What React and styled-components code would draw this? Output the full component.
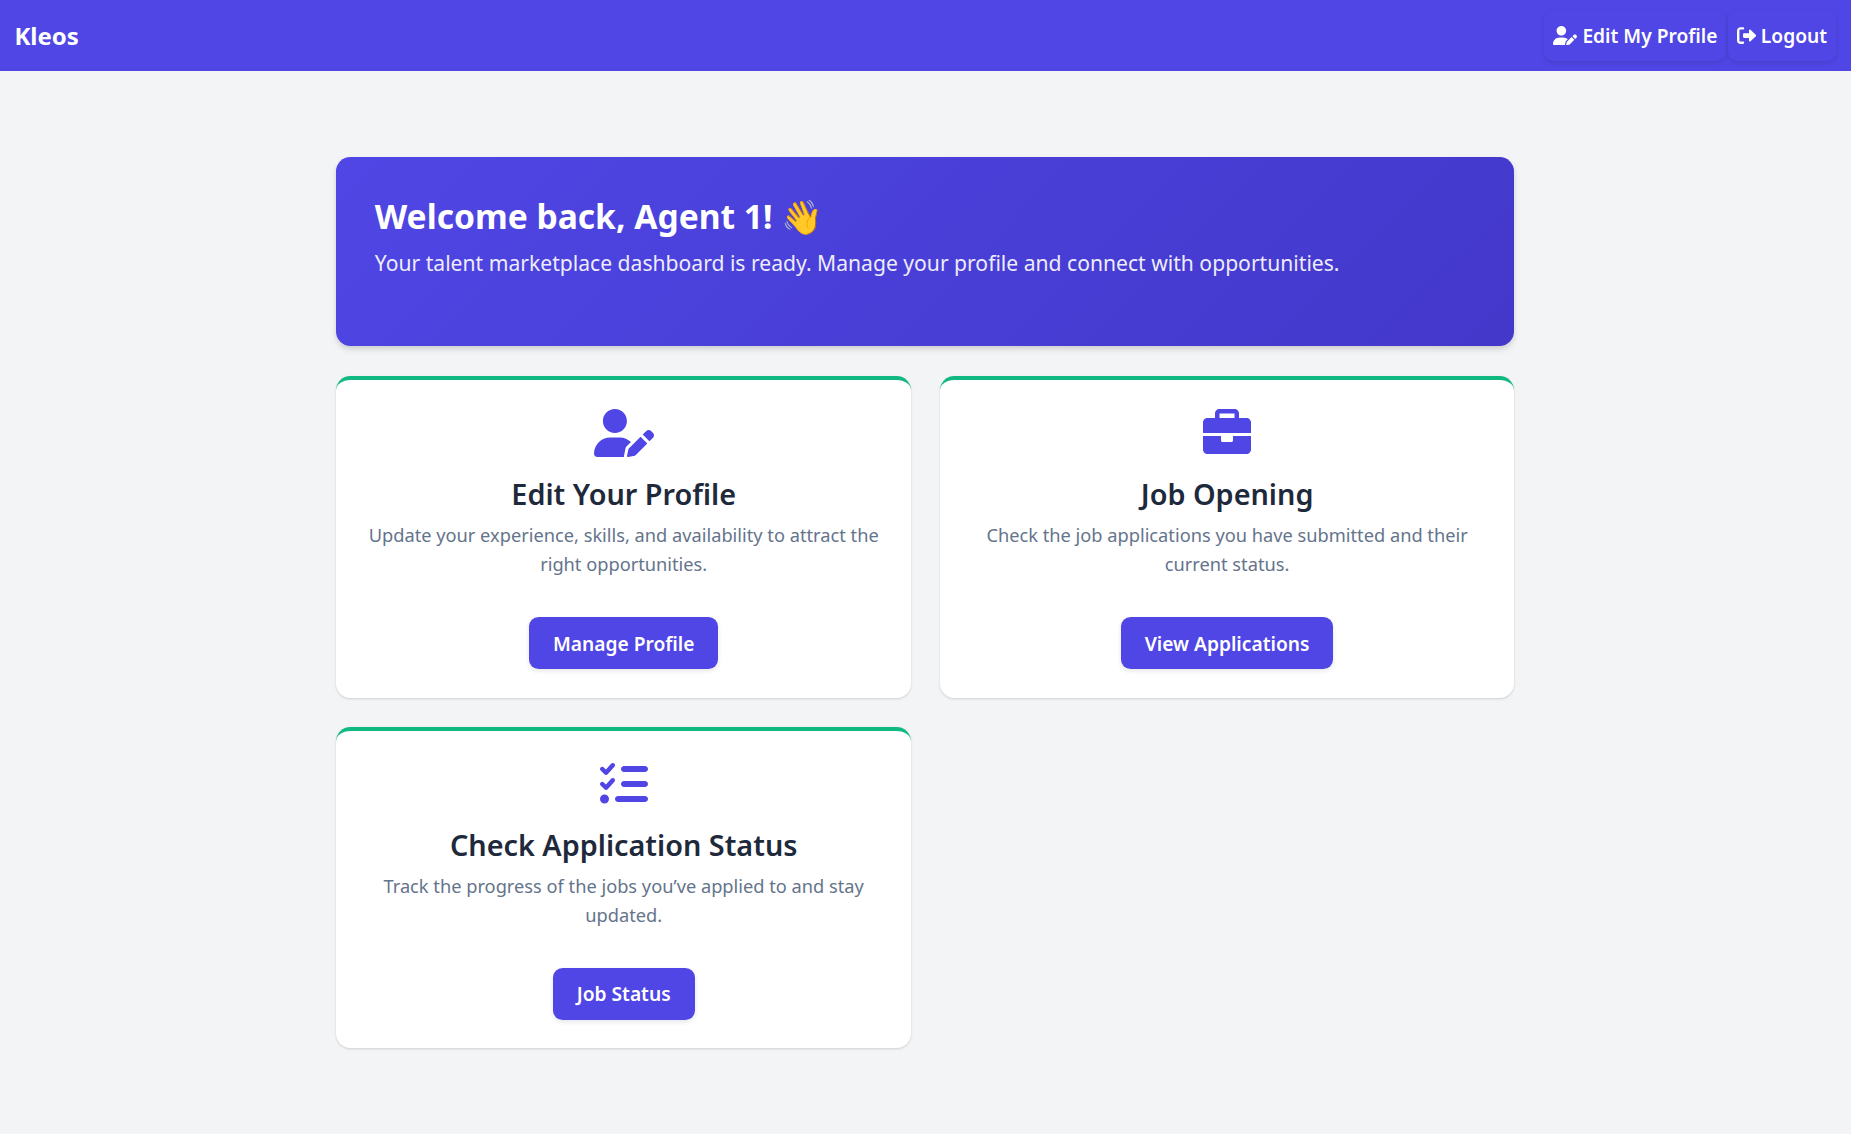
import React from "react";
import styled, { createGlobalStyle } from "styled-components";
import { FaListCheck } from "react-icons/fa6";

const GlobalStyle = createGlobalStyle`
  *, *::before, *::after { box-sizing: border-box; }
  body {
    margin: 0;
    background: #f3f4f6;
    color: #1e293b;
    font-family: "Noto Sans", sans-serif;
    font-size: 19.2px;
    line-height: 1.6;
  }
  h1, h2, p { margin: 0; }
`;

const Page = styled.div`
  min-height: 1134px;
`;

const Navbar = styled.header`
  display: flex;
  align-items: center;
  justify-content: space-between;
  height: 71px;
  padding: 0 14.4px;
  background: #4f46e5;
`;

const Brand = styled.a`
  padding-top: 2px;
  color: #fff;
  font-size: 24px;
  font-weight: 700;
`;

const NavActions = styled.nav`
  display: flex;
  gap: 1.2px;
  padding-right: 0.6px;
`;

const NavButton = styled.button`
  display: flex;
  align-items: center;
  gap: 5px;
  height: 51px;
  padding: 0 9px;
  border: 0;
  border-radius: 9.6px;
  background: #4f46e5;
  color: #fff;
  font: 600 19.2px "Noto Sans", sans-serif;
  box-shadow: 0 2px 5px rgba(0, 0, 0, 0.1);
  svg { display: block; height: 19.2px; width: ${(p) => (p.$wide ? 24 : 19.2)}px; }
`;

const Container = styled.main`
  width: 1178px;
  margin-left: 336.4px;
  padding: 86.4px 0;
`;

const Hero = styled.section`
  height: 189px;
  padding: 34px 38.4px;
  border-radius: 14.4px;
  background: linear-gradient(135deg, #4f46e5, #4338ca);
  color: #fff;
  box-shadow: 0 4px 6px rgba(0, 0, 0, 0.1), 0 2px 4px rgba(0, 0, 0, 0.06);
`;

const HeroTitle = styled.h1`
  font-size: 33.6px;
  font-weight: 700;
  line-height: 50px;
`;

const HeroText = styled.p`
  margin-top: 5px;
  font-size: 21.12px;
  line-height: 34px;
  opacity: 0.9;
`;

const CardGrid = styled.div`
  display: grid;
  grid-template-columns: 1fr 1fr;
  gap: 28.8px;
  margin-top: 30px;
`;

const Card = styled.article`
  display: flex;
  flex-direction: column;
  align-items: center;
  height: 321.6px;
  padding: 28.8px;
  border-top: 4px solid #10b981;
  border-radius: 14.4px;
  background: #fff;
  text-align: center;
  box-shadow: 0 1px 3px rgba(0, 0, 0, 0.1), 0 1px 2px rgba(0, 0, 0, 0.06);
`;

const CardIcon = styled.div`
  height: 48px;
  color: #4f46e5;
  svg { display: block; height: 48px; width: ${(p) => (p.$wide ? 60 : 48)}px; }
`;

const CardTitle = styled.h2`
  margin-top: 14px;
  font-size: 28.8px;
  font-weight: 600;
  line-height: 46px;
`;

const CardText = styled.p`
  margin-top: 4px;
  color: #64748b;
  font-size: 18.24px;
  line-height: 29.2px;
`;

const CardButton = styled.button`
  margin-top: auto;
  height: 52px;
  padding: 0 24px;
  border: 0;
  border-radius: 9.6px;
  background: #4f46e5;
  color: #fff;
  font: 600 19.2px "Noto Sans", sans-serif;
  box-shadow: 0 2px 5px rgba(0, 0, 0, 0.1);
`;

const UserPenIcon = () => (
  <svg viewBox="0 0 640 512" fill="currentColor" aria-hidden="true">
    <path d="M223.1 256c70.7 0 128-57.31 128-128s-57.3-128-128-128C152.4 0 95.1 57.31 95.1 128S153.3 256 223.1 256zM274.7 304H173.3C77.61 304 0 381.7 0 477.4C0 496.5 15.52 512 34.66 512h286.4c-1.246-5.531-1.43-11.31-.2832-17.04l14.28-71.41c1.943-9.723 6.676-18.56 13.68-25.56l45.72-45.72C363.3 322.4 321.2 304 274.7 304zM371.4 420.6c-2.514 2.512-4.227 5.715-4.924 9.203l-14.28 71.41c-1.258 6.289 4.293 11.84 10.59 10.59l71.42-14.29c3.482-.6992 6.682-2.406 9.195-4.922l125.3-125.3l-72.01-72.01L371.4 420.6zM629.5 255.7l-21.1-21.11c-14.06-14.06-36.85-14.06-50.91 0l-38.13 38.14l72.01 72.01l38.13-38.13C643.5 292.5 643.5 269.7 629.5 255.7z" />
  </svg>
);

const LogoutIcon = () => (
  <svg viewBox="0 0 512 512" fill="currentColor" aria-hidden="true">
    <path d="M96 480h64C177.7 480 192 465.7 192 448S177.7 416 160 416H96c-17.67 0-32-14.33-32-32V128c0-17.67 14.33-32 32-32h64C177.7 96 192 81.67 192 64S177.7 32 160 32H96C42.98 32 0 74.98 0 128v256C0 437 42.98 480 96 480zM504.8 238.5l-144.1-136c-6.975-6.578-17.2-8.375-26-4.594c-8.803 3.797-14.51 12.47-14.51 22.05l-.0918 72l-128-.001c-17.69 0-32.02 14.33-32.02 32v64c0 17.67 14.34 32 32.02 32l128 .001l.0918 71.1c0 9.578 5.707 18.25 14.51 22.05c8.803 3.781 19.03 1.984 26-4.594l144.1-136C514.4 264.4 514.4 247.6 504.8 238.5z" />
  </svg>
);

const BriefcaseIcon = () => (
  <svg viewBox="0 0 512 512" fill="currentColor" aria-hidden="true">
    <path d="M320 336c0 8.844-7.156 16-16 16h-96C199.2 352 192 344.8 192 336V288H0v144C0 457.6 22.41 480 48 480h416c25.59 0 48-22.41 48-48V288h-192V336zM464 96H384V48C384 22.41 361.6 0 336 0h-160C150.4 0 128 22.41 128 48V96H48C22.41 96 0 118.4 0 144V256h512V144C512 118.4 489.6 96 464 96zM336 96h-160V48h160V96z" />
  </svg>
);

const cards = [
  {
    icon: UserPenIcon,
    wide: true,
    title: "Edit Your Profile",
    text: "Update your experience, skills, and availability to attract the right opportunities.",
    action: "Manage Profile",
  },
  {
    icon: BriefcaseIcon,
    title: "Job Opening",
    text: "Check the job applications you have submitted and their current status.",
    action: "View Applications",
  },
  {
    icon: FaListCheck,
    title: "Check Application Status",
    text: "Track the progress of the jobs you’ve applied to and stay updated.",
    action: "Job Status",
  },
];

export default function App() {
  return (
    <Page>
      <GlobalStyle />
      <Navbar>
        <Brand>Kleos</Brand>
        <NavActions>
          <NavButton $wide><UserPenIcon />Edit My Profile</NavButton>
          <NavButton><LogoutIcon />Logout</NavButton>
        </NavActions>
      </Navbar>
      <Container>
        <Hero>
          <HeroTitle>Welcome back, Agent 1! 👋</HeroTitle>
          <HeroText>
            Your talent marketplace dashboard is ready. Manage your profile and connect with opportunities.
          </HeroText>
        </Hero>
        <CardGrid>
          {cards.map(({ icon: Icon, wide, title, text, action }) => (
            <Card key={title}>
              <CardIcon $wide={wide}><Icon /></CardIcon>
              <CardTitle>{title}</CardTitle>
              <CardText>{text}</CardText>
              <CardButton>{action}</CardButton>
            </Card>
          ))}
        </CardGrid>
      </Container>
    </Page>
  );
}
